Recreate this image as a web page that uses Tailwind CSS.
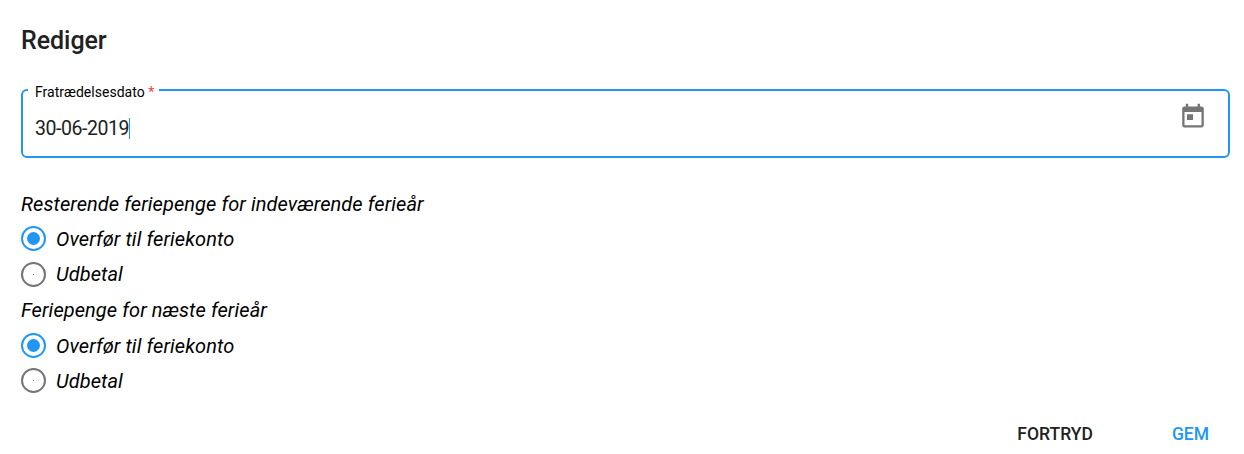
<!DOCTYPE html>
<html lang="da">
<head>
    <meta charset="UTF-8">
    <meta name="viewport" content="width=device-width, initial-scale=1.0">
    <title>Rediger</title>
    <script src="https://cdn.jsdelivr.net/npm/@tailwindcss/browser@4"></script>
</head>
<body class="bg-white font-['Roboto',sans-serif] text-black">
    <form class="h-[454px] pl-[21px] pr-[14px] pt-[25px] flex flex-col">
        <h2 class="text-[25px] leading-8 font-medium tracking-[-0.05px] text-[#212121]">Rediger</h2>

        <!-- Fratrædelsesdato -->
        <div class="relative mt-8 h-[69px] shrink-0 border-2 border-[#2196f3] rounded-md pl-3 pr-6 flex justify-between">
            <label class="absolute left-[5px] -top-[9px] h-5 pl-[7px] pr-[5px] bg-white text-sm leading-5 tracking-[0.02px] whitespace-nowrap">Fratrædelsesdato <span class="text-[#f44336]">*</span></label>
            <div class="pt-[26px] flex items-start">
                <span class="text-[19.5px] leading-6 tracking-[-0.43px] text-[#212121]">30-06-2019</span>
                <span class="w-px h-[21px] mt-px bg-[#2196f3]"></span>
            </div>
            <svg class="w-[22px] h-[25px] mt-3 text-[#757575]" viewBox="0 -0.7 22 25" fill="currentColor">
                <path d="M19.5 2.8H18V0h-2.4v2.8H6.2V0H3.8v2.8H2.5C1.2 2.8.2 3.8.2 5v16.5c0 1.2 1 2.2 2.3 2.2h17c1.2 0 2.3-1 2.3-2.2V5c0-1.2-1.1-2.2-2.3-2.2zm0 18.7h-17V8.4h17v13.1zM5 10.6h6v5.8H5z"/>
            </svg>
        </div>

        <!-- Feriepenge -->
        <div class="mt-7 text-xl tracking-[0.075px] italic">
            <p class="h-[35px] leading-9">Resterende feriepenge for indeværende ferieår</p>
            <label class="h-[35px] flex items-center gap-[10px]">
                <span class="w-[25px] h-[25px] rounded-full border-2 border-[#2196f3] flex items-center justify-center"><span class="w-[13px] h-[13px] rounded-full bg-[#2196f3]"></span></span>
                Overfør til feriekonto
            </label>
            <label class="h-9 pt-px flex items-center gap-[10px]">
                <span class="w-[25px] h-[25px] rounded-full border-2 border-[#757575] flex items-center justify-center"><span class="w-px h-px bg-[#2196f3]"></span></span>
                <span class="pb-[2px]">Udbetal</span>
            </label>
            <p class="h-9 leading-9">Feriepenge for næste ferieår</p>
            <label class="h-[35px] flex items-center gap-[10px]">
                <span class="w-[25px] h-[25px] rounded-full border-2 border-[#2196f3] flex items-center justify-center"><span class="w-[13px] h-[13px] rounded-full bg-[#2196f3]"></span></span>
                Overfør til feriekonto
            </label>
            <label class="h-[35px] flex items-center gap-[10px]">
                <span class="w-[25px] h-[25px] rounded-full border-2 border-[#757575] flex items-center justify-center"><span class="w-px h-px bg-[#2196f3]"></span></span>
                Udbetal
            </label>
        </div>

        <div class="mt-6 pr-[21px] flex justify-end gap-[79px] text-[17.5px] leading-6 font-medium">
            <button type="button" class="text-[#212121]">FORTRYD</button>
            <button type="submit" class="text-[#2196f3]">GEM</button>
        </div>
    </form>
</body>
</html>
